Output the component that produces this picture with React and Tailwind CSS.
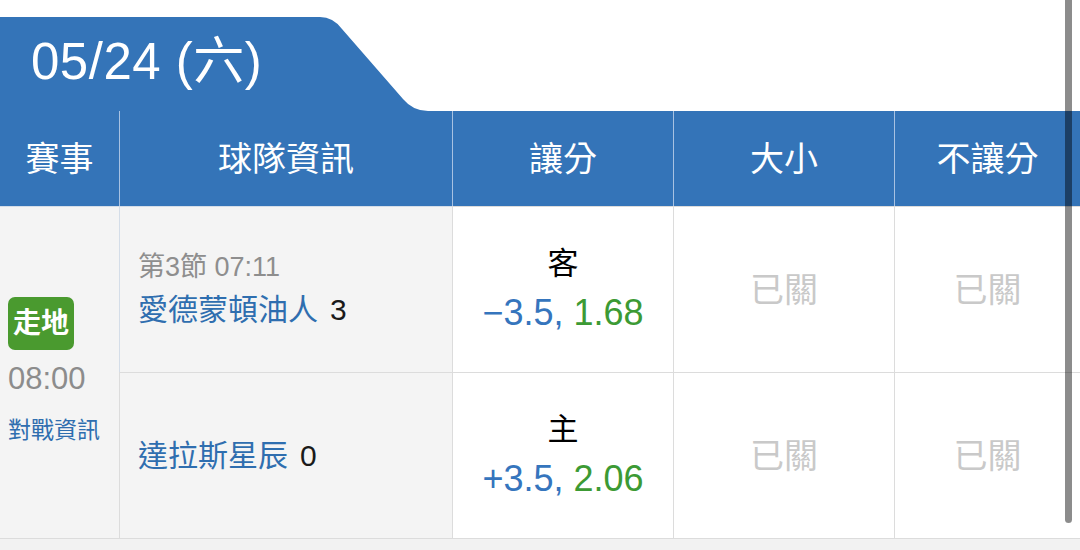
const rows = [
  { team: "愛德蒙頓油人", score: 3, side: "客", line: "−3.5", odds: "1.68", status: "第3節 07:11" },
  { team: "達拉斯星辰", score: 0, side: "主", line: "+3.5", odds: "2.06" },
];

function Closed({ top }) {
  return (
    <div className={`flex items-center justify-center bg-white border-l border-[#dcdcdc] ${top ? "border-t" : ""}`}>
      <span className="text-[34px] text-[#c9c9c9] leading-none">已關</span>
    </div>
  );
}

export default function App() {
  return (
    <div className="relative w-[1080px] h-[550px] overflow-hidden bg-white font-['Liberation_Sans','Noto_Sans_CJK_TC',sans-serif]">
      <div className="pt-[17px]">
        {/* date tab */}
        <div className="flex h-[94px]">
          <div className="w-[300px] bg-[#3474b8] flex items-center pl-[31px] pb-[6px]">
            <span className="text-[51px] text-white leading-none tracking-[0.5px]">05/24 (六)</span>
          </div>
          <svg width="130" height="94" viewBox="0 0 130 94" className="block">
            <path d="M0 0 L20 0 Q33 0 42 12 L103 82 Q113 94 128 94 L130 94 L130 94 L0 94 Z" fill="#3474b8" />
          </svg>
        </div>

        <div className="grid grid-cols-[119px_333px_221px_221px_1fr] grid-rows-[95px_166px_166px]">
          {/* header */}
          {["賽事", "球隊資訊", "讓分", "大小", "不讓分"].map((h, i) => (
            <div
              key={h}
              className={`bg-[#3474b8] flex items-center justify-center text-white text-[34px] leading-none ${i > 0 ? "border-l border-[#a8c2e2]" : ""}`}
            >
              {h}
            </div>
          ))}

          {/* match info column */}
          <div className="row-span-2 bg-[#f4f4f4] border-t border-[#d4dde8] flex flex-col justify-center pl-2 pb-[6px]">
            <div className="w-[66px] h-[53px] rounded-[7px] bg-[#4a9a2f] flex items-center justify-center">
              <span className="text-white text-[28px] font-bold leading-none">走地</span>
            </div>
            <div className="text-[31px] text-[#8c8c8c] leading-none mt-[13px]">08:00</div>
            <div className="text-[23px] text-[#2f6eaf] leading-none mt-[25px]">對戰資訊</div>
          </div>

          {rows.map((r, i) => (
            <div key={r.team} className="contents">
              <div className={`bg-[#f4f4f4] border-l border-t ${i === 0 ? "border-[#d4dde8]" : "border-[#dcdcdc]"} flex flex-col justify-center pl-[18px]`}>
                {r.status && <div className="text-[27px] text-[#8e8e8e] leading-none mb-[14px]">{r.status}</div>}
                <div className="text-[30px] leading-none">
                  <span className="text-[#2f6eaf]">{r.team}</span>
                  <span className="text-[#1a1a1a] ml-[12px]">{r.score}</span>
                </div>
              </div>
              <div className={`bg-white border-l border-t border-[#dcdcdc] flex flex-col items-center justify-center`}>
                <div className="text-[31px] text-black leading-none">{r.side}</div>
                <div className="text-[36px] leading-none mt-[16px]">
                  <span className="text-[#3575bd]">{r.line}, </span>
                  <span className="text-[#3c9a34]">{r.odds}</span>
                </div>
              </div>
              <Closed top />
              <Closed top />
            </div>
          ))}
        </div>
        <div className="h-[12px] border-t border-[#dcdcdc] bg-[#f2f2f2]" />
      </div>

      {/* scrollbar */}
      <div className="absolute left-[1065px] top-0 w-[7px] h-[523px] rounded-b-full bg-black/45" />
    </div>
  );
}
